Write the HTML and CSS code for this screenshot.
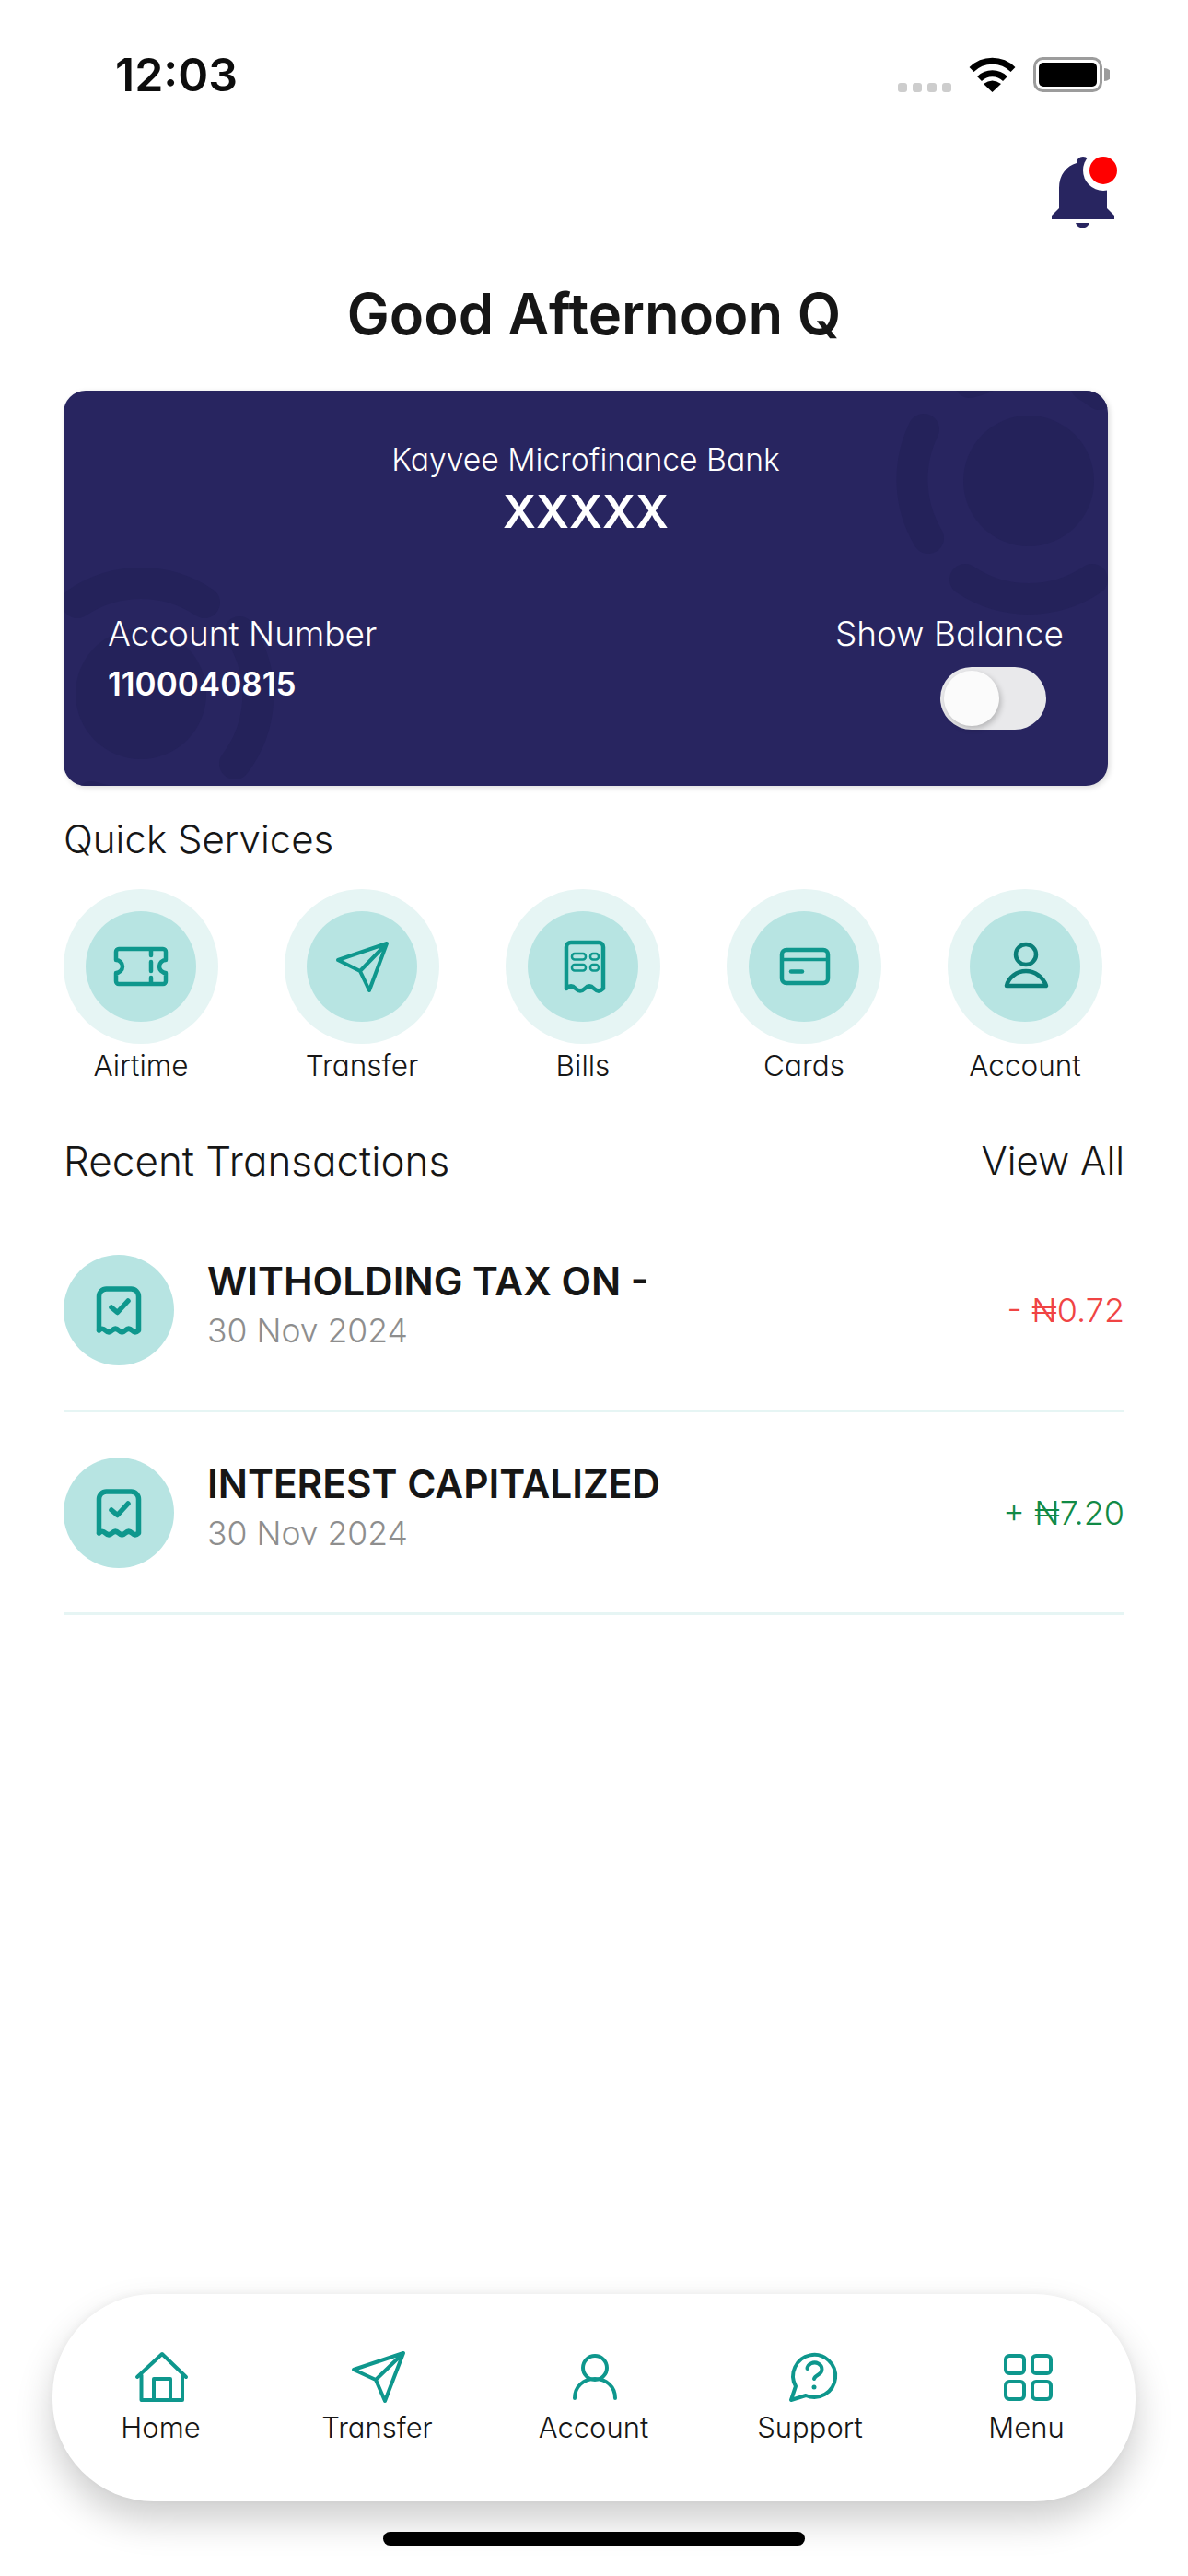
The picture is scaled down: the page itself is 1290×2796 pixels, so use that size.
FILE: index.html
```html
<!DOCTYPE html>
<html lang="en">
<head>
<meta charset="utf-8">
<title>Home</title>
<link rel="stylesheet" href="styles.css">
</head>
<body>
<div class="screen">
  <header class="status">
    <span class="time">12:03</span>
    <div class="status-icons">
      <div class="signal"><span></span><span></span><span></span><span></span></div>
      <svg class="wifi" width="51" height="38" viewBox="0 0 51 38"><path class="wifi-arc" d="M3 13.5A32 32 0 0 1 48 13.5"/><path class="wifi-arc" d="M11.5 23.5A20 20 0 0 1 39.5 23.5"/><path class="wifi-fill" d="M25.5 38L16 29Q25.5 22 35 29Z"/></svg>
      <svg class="battery" width="83" height="38" viewBox="0 0 83 38"><rect class="batt-frame" x="1.5" y="1.5" width="72" height="35" rx="9"/><rect class="batt-fill" x="6" y="6" width="63" height="26" rx="5"/><path class="batt-tip" d="M77 12a8 7 0 0 1 0 14z"/></svg>
    </div>
  </header>
  <div class="bell-row">
    <svg class="bell" width="72" height="80" viewBox="0 0 72 80"><path class="navy" d="M0 68V64L8 56V34C8 20 16 10 27 7C27 3 30 0 34 0C38 0 41 3 41 7C52 10 60 20 60 34V56L68 64V68Z"/><path class="navy" d="M26 72H41A8 8 0 0 1 26 72Z"/><circle class="white" cx="56" cy="15" r="22"/><circle class="red" cx="56" cy="15" r="15"/></svg>
  </div>
  <h1 class="greeting">Good Afternoon Q</h1>

  <section class="card">
    <svg class="card-art" width="1134" height="429" viewBox="0 0 1134 429">
      <circle class="blob" cx="1048" cy="98" r="71"/>
      <path class="ring" d="M934 42A124 124 0 0 0 939 160"/>
      <path class="ring" d="M979 205A124 124 0 0 0 1117 205"/>
      <path class="ring" d="M984 -9A124 124 0 0 0 1000 -14"/>
      <path class="ring" d="M1110 -6A124 124 0 0 1 1125 4"/>
      <circle class="blob" cx="84" cy="329" r="71"/>
      <path class="ring" d="M15 230A124 124 0 0 1 153 230"/>
      <path class="ring" d="M191 262A124 124 0 0 1 186 405"/>
      <path class="ring" d="M30 441A124 124 0 0 0 60 447"/>
    </svg>
    <div class="card-bank">Kayvee Microfinance Bank</div>
    <div class="card-balance">XXXXX</div>
    <div class="card-row">
      <div>
        <div class="card-label">Account Number</div>
        <div class="card-number">1100040815</div>
      </div>
      <div class="card-right">
        <div class="card-label">Show Balance</div>
        <div class="toggle"><span class="knob"></span></div>
      </div>
    </div>
  </section>

  <h2 class="section-title quick-title">Quick Services</h2>
  <div class="services">
    <div class="service">
      <div class="halo"><div class="disc">
        <svg class="ico" width="72" height="72" viewBox="0 0 72 72"><path d="M12 17h48a3 3 0 0 1 3 3v9a7 7 0 0 0 0 14v9a3 3 0 0 1-3 3H12a3 3 0 0 1-3-3v-9a7 7 0 0 0 0-14v-9a3 3 0 0 1 3-3z"/><path d="M47 18v6M47 31v10M47 48v6"/></svg>
      </div></div>
      <span class="service-label">Airtime</span>
    </div>
    <div class="service">
      <div class="halo"><div class="disc">
        <svg class="ico thin" width="72" height="72" viewBox="0 0 72 72"><path d="M63 11L10 29L34 41L44 62ZM63 11L34 41"/></svg>
      </div></div>
      <span class="service-label">Transfer</span>
    </div>
    <div class="service">
      <div class="halo"><div class="disc">
        <svg class="ico" width="72" height="72" viewBox="0 0 72 72"><path d="M18 60V15a5 5 0 0 1 5-5h30a5 5 0 0 1 5 5v45q-5 5-10 0t-10 0t-10 0t-10 0"/><g class="fine"><rect x="24" y="22" width="15" height="6.500" rx="3"/><rect x="44" y="22" width="9" height="6.500" rx="3"/><rect x="24" y="34" width="15" height="6.500" rx="3"/><rect x="44" y="34" width="9" height="6.500" rx="3"/></g></svg>
      </div></div>
      <span class="service-label">Bills</span>
    </div>
    <div class="service">
      <div class="halo"><div class="disc">
        <svg class="ico" width="72" height="72" viewBox="0 0 72 72"><rect x="12" y="18" width="50" height="36" rx="5"/><path class="mid" d="M12 28.500H62"/><path d="M22 41.500H34"/></svg>
      </div></div>
      <span class="service-label">Cards</span>
    </div>
    <div class="service">
      <div class="halo"><div class="disc">
        <svg class="ico dark" width="72" height="72" viewBox="0 0 72 72"><circle cx="37" cy="23" r="11"/><path d="M16 57C18 48 27 41 37 41S56 48 59 57Z"/></svg>
      </div></div>
      <span class="service-label">Account</span>
    </div>
  </div>

  <div class="recent-head">
    <h2 class="section-title recent-title">Recent Transactions</h2>
    <span class="section-title">View All</span>
  </div>

  <ul class="tx-list">
    <li class="tx">
      <div class="disc tx-disc">
        <svg class="ico bold" width="60" height="60" viewBox="0 0 60 60"><path d="M8.500 52V15a8 8 0 0 1 8-8h27a8 8 0 0 1 8 8V52q-3.600 3.500-7.200 0t-7.200 0t-7.200 0t-7.200 0t-7.200 0t-7 0"/><path d="M22 27l6.500 5.500L40 20"/></svg>
      </div>
      <div class="tx-text">
        <div class="tx-title">WITHOLDING TAX ON -</div>
        <div class="tx-date">30 Nov 2024</div>
      </div>
      <div class="tx-amount debit">- ₦0.72</div>
    </li>
    <li class="tx">
      <div class="disc tx-disc">
        <svg class="ico bold" width="60" height="60" viewBox="0 0 60 60"><path d="M8.500 52V15a8 8 0 0 1 8-8h27a8 8 0 0 1 8 8V52q-3.600 3.500-7.200 0t-7.200 0t-7.200 0t-7.200 0t-7.200 0t-7 0"/><path d="M22 27l6.500 5.500L40 20"/></svg>
      </div>
      <div class="tx-text">
        <div class="tx-title">INTEREST CAPITALIZED</div>
        <div class="tx-date">30 Nov 2024</div>
      </div>
      <div class="tx-amount credit">+ ₦7.20</div>
    </li>
  </ul>

  <nav class="tabbar">
    <div class="tab">
      <svg class="ico thin" width="64" height="64" viewBox="0 0 64 64"><path d="M6 32L33 7L59 32M10.500 30V57H55V30M24 57V34H42V57"/></svg>
      <span class="tab-label">Home</span>
    </div>
    <div class="tab">
      <svg class="ico thin" width="64" height="64" viewBox="0 0 64 64"><path d="M60 6L6 24L30 35L40 58ZM60 6L30 35"/></svg>
      <span class="tab-label">Transfer</span>
    </div>
    <div class="tab">
      <svg class="ico thin" width="64" height="64" viewBox="0 0 64 64"><circle cx="33" cy="22" r="13"/><path d="M11 55C11 42 21 34 33 34S55 42 55 55"/></svg>
      <span class="tab-label">Account</span>
    </div>
    <div class="tab">
      <svg class="ico thin" width="64" height="64" viewBox="0 0 64 64"><path d="M11 57L16 42A23 23 0 1 1 27 52Z"/><path d="M28.500 23a8 7 0 1 1 12 6.500c-2.500 1.500-4 2.500-4.500 4.500"/><circle class="dot" cx="36" cy="43" r="2.500"/></svg>
      <span class="tab-label">Support</span>
    </div>
    <div class="tab">
      <svg class="ico thin" width="64" height="64" viewBox="0 0 64 64"><rect x="9" y="9" width="20" height="19" rx="4"/><rect x="38" y="9" width="20" height="19" rx="4"/><rect x="9" y="37" width="20" height="19" rx="4"/><rect x="38" y="37" width="20" height="19" rx="4"/></svg>
      <span class="tab-label">Menu</span>
    </div>
  </nav>
  <div class="home-indicator"></div>
</div>
</body>
</html>
```
FILE: styles.css
```css
* { box-sizing: border-box; }
html, body { margin: 0; padding: 0; background: #fff; }
.screen {
  width: 1290px;
  height: 2796px;
  display: flex;
  flex-direction: column;
  overflow: hidden;
  color: #161616;
  font-family: Inter, "Noto Sans", sans-serif;
  font-weight: 300;
  font-feature-settings: "cv11" 1;
}
h1, h2, ul { margin: 0; padding: 0; font-weight: inherit; font-size: inherit; }
li { list-style: none; }

/* status bar */
.status { height: 162px; display: flex; align-items: center; justify-content: space-between; padding: 0 85px 0 125px; }
.time { font-size: 50px; line-height: 60px; font-weight: 600; color: #0d0d0d; letter-spacing: 0; }
.status-icons { display: flex; align-items: flex-end; }
.signal { display: flex; gap: 6px; margin-right: 19px; }
.signal span { width: 10px; height: 10px; border-radius: 3px; background: #cdcdcd; }
.wifi { margin-right: 19px; display: block; }
.wifi-arc { fill: none; stroke: #000; stroke-width: 7; }
.wifi-fill { fill: #000; }
.battery { display: block; }
.batt-frame { fill: none; stroke: #9c9c9c; stroke-width: 3; }
.batt-fill { fill: #000; }
.batt-tip { fill: #9c9c9c; }

/* bell + greeting */
.bell-row { display: flex; justify-content: flex-end; padding: 8px 76px 0 0; }
.bell { display: block; }
.navy { fill: #282560; }
.white { fill: #fff; }
.red { fill: #ff0000; }
.greeting { margin-top: 56px; text-align: center; font-size: 61.500px; line-height: 70px; font-weight: 600; color: #161616; letter-spacing: 0; }

/* account card */
.card {
  position: relative;
  overflow: hidden;
  width: 1134px;
  height: 429px;
  margin: 48px 0 0 69px;
  padding-top: 53px;
  border-radius: 24px;
  background: #282560;
  color: #fff;
  box-shadow: 2px 2px 6px rgba(0, 0, 0, .14);
}
.card-art { position: absolute; left: 0; top: 0; }
.blob { fill: #24225a; }
.ring { fill: none; stroke: #24225a; stroke-width: 34; stroke-linecap: round; }
.card-bank, .card-balance, .card-row { position: relative; }
.card-bank { text-align: center; font-size: 33.700px; line-height: 44px; }
.card-balance { margin-top: 6px; text-align: center; font-size: 50px; line-height: 56px; font-weight: 600; }
.card-row { display: flex; justify-content: space-between; margin-top: 83px; padding: 0 48px; }
.card-label { font-size: 37px; line-height: 44px; }
.card-number { margin-top: 10px; font-size: 35px; line-height: 44px; font-weight: 600; }
.card-right { display: flex; flex-direction: column; align-items: flex-end; }
.toggle { width: 115px; height: 68px; margin: 14px 19px 0 0; padding: 4px; border-radius: 34px; background: #e9e9eb; }
.knob { display: block; width: 60px; height: 60px; border-radius: 50%; background: #fbfbfb; box-shadow: 2px 3px 6px rgba(0, 0, 0, .22); }

/* sections */
.section-title { font-size: 42px; line-height: 50px; color: #161616; }
.recent-title { font-size: 44px; }
.quick-title { margin: 33px 0 0 69px; }
.services { display: flex; gap: 72px; margin: 29px 0 0 69px; }
.service { width: 168px; display: flex; flex-direction: column; align-items: center; }
.halo { width: 168px; height: 168px; border-radius: 50%; background: #e6f5f4; display: flex; align-items: center; justify-content: center; }
.disc { width: 120px; height: 120px; flex: none; border-radius: 50%; background: #b7e4e2; display: flex; align-items: center; justify-content: center; }
.service-label { margin-top: 4px; font-size: 31.500px; line-height: 40px; color: #161616; }

/* icons */
.ico { display: block; fill: none; stroke: #0e978d; stroke-width: 4.500; stroke-linecap: round; stroke-linejoin: round; }
.ico.thin { stroke-width: 4; }
.ico.bold { stroke-width: 5.500; }
.ico.dark { stroke: #0a7e78; }
.ico .fine { stroke-width: 2.500; }
.ico .mid { stroke-width: 3.500; }
.ico .dot { fill: #0e978d; stroke: none; }

/* transactions */
.recent-head { display: flex; justify-content: space-between; margin: 58px 69px 0; }
.tx-list { margin: 28px 69px 0; }
.tx { height: 220px; display: flex; align-items: center; border-bottom: 3px solid #e6f5f4; }
.tx-disc { margin-right: 36px; }
.tx-text { flex: 1; padding-bottom: 10px; }
.tx-title { font-size: 42.400px; line-height: 50px; font-weight: 600; color: #161616; }
.tx-date { margin-top: 6px; font-size: 35.500px; line-height: 46px; color: #8e8e8e; }
.tx-amount { font-size: 36px; line-height: 46px; }
.debit { color: #f04444; }
.credit { color: #118a46; }

/* tab bar */
.tabbar {
  display: grid;
  grid-template-columns: repeat(5, 235px);
  width: 1176px;
  height: 225px;
  margin: auto 0 0 57px;
  padding-top: 58px;
  border-radius: 110px;
  background: #fff;
  box-shadow: 0 20px 40px rgba(0, 0, 0, .2), 0 -2px 8px rgba(0, 0, 0, .04);
}
.tab { display: flex; flex-direction: column; align-items: center; }
.tab-label { margin-top: 3px; font-size: 31px; line-height: 40px; color: #161616; }
.home-indicator { width: 458px; height: 15px; margin: 33px 0 33px 416px; border-radius: 8px; background: #000; }
```
